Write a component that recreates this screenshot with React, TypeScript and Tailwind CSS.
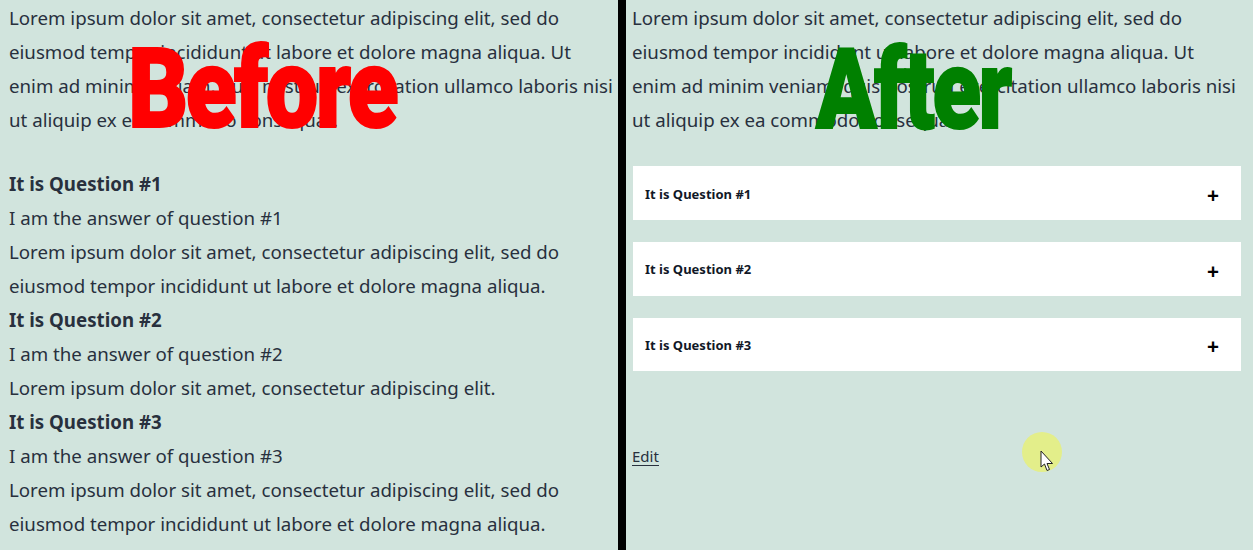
const font = { fontFamily: '"Noto Sans", "Open Sans", sans-serif' };

function Card({ q, mt, h, label }: { q: string; mt: string; h: string; label: string }) {
  return (
    <div className={`ml-px flex w-[608px] items-center justify-between bg-white pl-3 pr-[22px] ${mt} ${h}`}>
      <span className={`text-[13px] font-bold text-[#111827] ${label}`}>{q}</span>
      <span className="mt-1 text-[21px] font-bold leading-none text-black">+</span>
    </div>
  );
}

export default function App() {
  return (
    <div style={font} className="flex h-[550px] w-[1253px] overflow-hidden bg-[#d1e4dd] text-[18.7px] leading-[34px] text-[#28303d]">
      <div className="relative w-[618px] shrink-0 pl-[9px] pt-px">
        <p>Lorem ipsum dolor sit amet, consectetur adipiscing elit, sed do<br />eiusmod tempor incididunt ut labore et dolore magna aliqua. Ut<br />enim ad minim veniam, quis nostrud exercitation ullamco laboris nisi<br />ut aliquip ex ea commodo consequat.</p>
        <p className="mt-[30px] font-bold">It is Question #1</p>
        <p>I am the answer of question #1</p>
        <p>Lorem ipsum dolor sit amet, consectetur adipiscing elit, sed do<br />eiusmod tempor incididunt ut labore et dolore magna aliqua.</p>
        <p className="font-bold">It is Question #2</p>
        <p>I am the answer of question #2</p>
        <p>Lorem ipsum dolor sit amet, consectetur adipiscing elit.</p>
        <p className="font-bold">It is Question #3</p>
        <p>I am the answer of question #3</p>
        <p>Lorem ipsum dolor sit amet, consectetur adipiscing elit, sed do<br />eiusmod tempor incididunt ut labore et dolore magna aliqua.</p>
        <span className="absolute left-[128px] top-[48px] origin-top-left scale-x-[0.835] text-[112px] font-black leading-[82px] tracking-[-3px] text-[#ff0000] [-webkit-text-stroke:2px_#ff0000] [font-family:Roboto]">Before</span>
      </div>
      <div className="w-2 shrink-0 bg-black" />
      <div className="relative grow pl-1.5 pt-px">
        <p>Lorem ipsum dolor sit amet, consectetur adipiscing elit, sed do<br />eiusmod tempor incididunt ut labore et dolore magna aliqua. Ut<br />enim ad minim veniam, quis nostrud exercitation ullamco laboris nisi<br />ut aliquip ex ea commodo consequat.</p>
        <Card q="It is Question #1" mt="mt-[29px]" h="h-[54px]" label="mt-px" />
        <Card q="It is Question #2" mt="mt-[22px]" h="h-[54px]" label="" />
        <Card q="It is Question #3" mt="mt-[22px]" h="h-[53px]" label="" />
        <a className="mt-[76px] block w-fit border-b border-[#28303d] text-[15px] leading-[18px]">Edit</a>
        <span className="absolute left-[190px] top-[49px] origin-top-left scale-x-[0.795] text-[112px] font-black leading-[82px] tracking-[-3px] text-[#008000] [-webkit-text-stroke:2px_#008000] [font-family:Roboto]">After</span>
        <div className="absolute left-[396px] top-[432px] h-10 w-10 rounded-full bg-[#e3ee8a]" />
        <svg className="absolute left-[414px] top-[450px]" width="14" height="22" viewBox="0 0 14 22">
          <path d="M1 1 L1 17 L4.5 14 L7 20.5 L9.5 19.5 L7 13.5 L12.5 13.5 Z" fill="#fff" stroke="#222" strokeWidth="1" />
        </svg>
      </div>
    </div>
  );
}
